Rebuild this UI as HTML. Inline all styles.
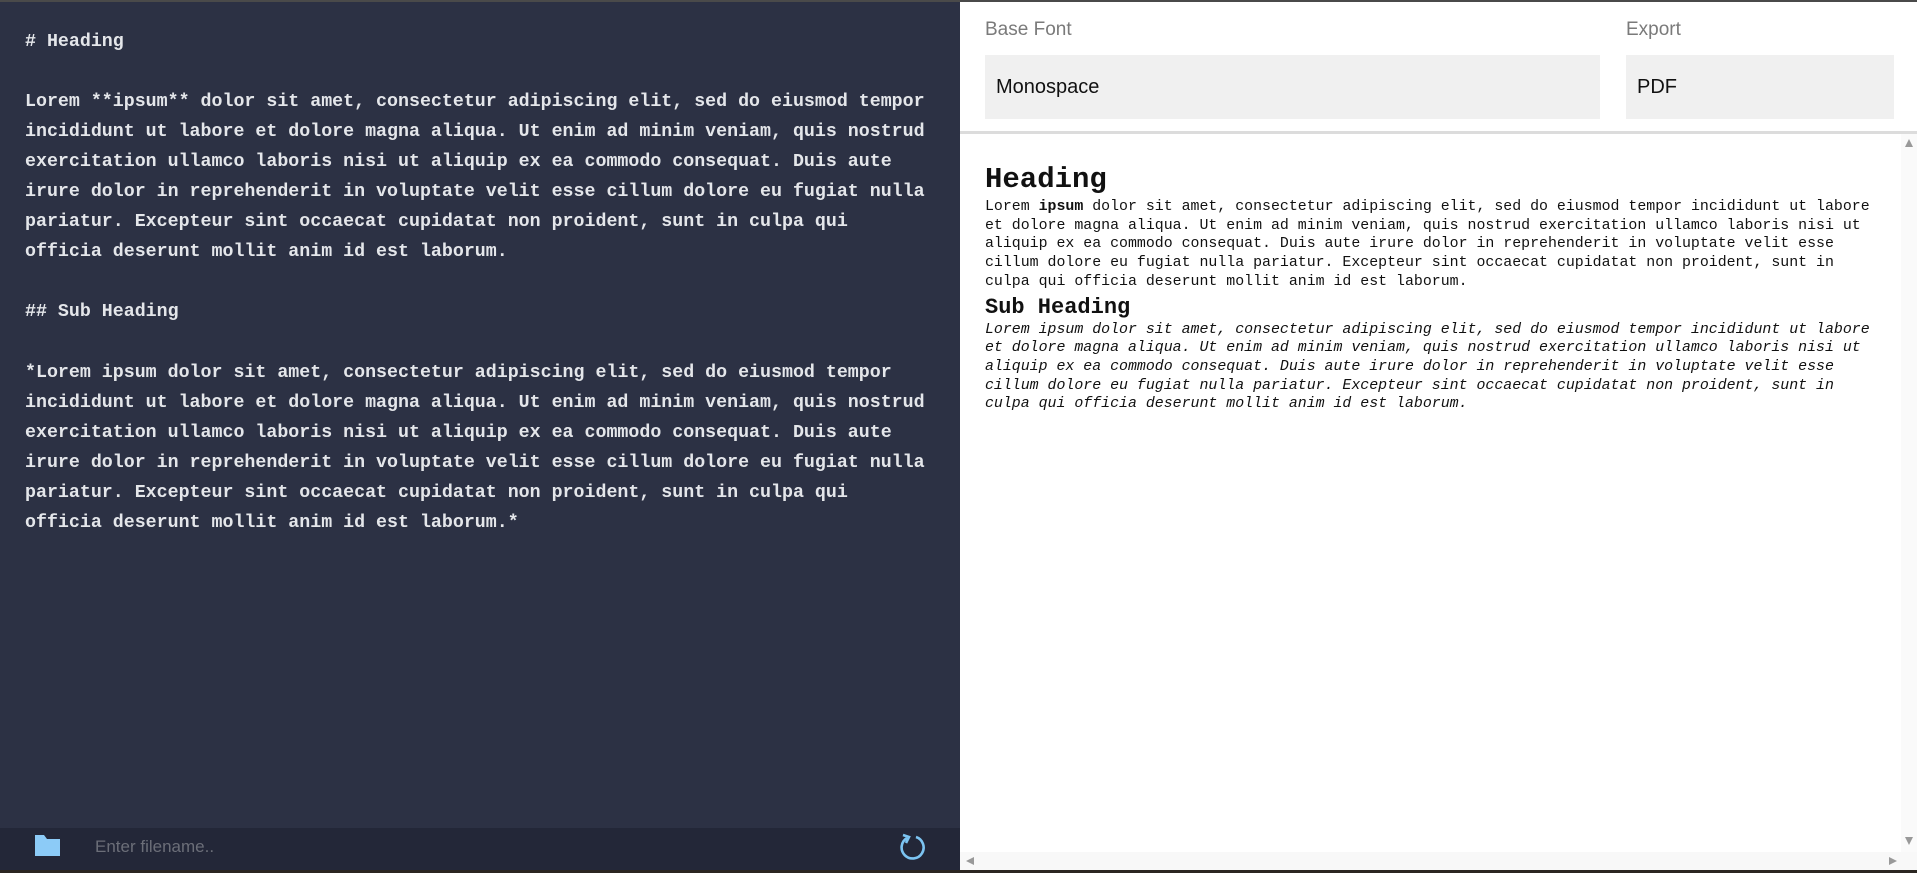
<!DOCTYPE html>
<html><head><meta charset="utf-8"><style>
*{margin:0;padding:0;box-sizing:border-box}
html,body{width:1917px;height:873px;overflow:hidden;background:#fff}
#top{position:absolute;left:0;top:0;width:1917px;height:2px;background:#4a4a4a}
#left{position:absolute;left:0;top:2px;width:960px;height:826px;background:#2c3144}
#ed{position:absolute;left:25px;top:25px;font:bold 18.3px/30.05px "Liberation Mono",monospace;color:#e4e6ea;white-space:pre}
#bar{position:absolute;left:0;top:828px;width:960px;height:42px;background:#232738}
#bot{position:absolute;left:0;top:870px;width:1917px;height:3px;background:#2b2621}
#ph{position:absolute;left:95px;top:837px;font:17px "Liberation Sans",sans-serif;color:#6b6e78}
.lab{position:absolute;top:19px;font:19px "Liberation Sans",sans-serif;color:#7a7a7a}
.box{position:absolute;top:55px;height:64px;background:#f0f0f0;font:20px "Liberation Sans",sans-serif;color:#111;padding-left:11px;line-height:64px}
#sep{position:absolute;left:960px;top:131px;width:957px;height:3px;background:#dcdcdc}
#prev{position:absolute;left:985px;top:162px;font:14.9px/18.7px "Liberation Mono",monospace;color:#111;white-space:pre}
#prev h1{font:bold 29px/36px "Liberation Mono",monospace;margin:0}
#prev h2{font:bold 22px/26px "Liberation Mono",monospace;margin:3px 0 0}
#vs{position:absolute;left:1901px;top:134px;width:16px;height:718px;background:#fafafa}
#hs{position:absolute;left:960px;top:852px;width:957px;height:18px;background:#f8f8f8}
</style></head><body>
<div id="top"></div>
<div id="left"><div id="ed"># Heading

Lorem **ipsum** dolor sit amet, consectetur adipiscing elit, sed do eiusmod tempor
incididunt ut labore et dolore magna aliqua. Ut enim ad minim veniam, quis nostrud
exercitation ullamco laboris nisi ut aliquip ex ea commodo consequat. Duis aute
irure dolor in reprehenderit in voluptate velit esse cillum dolore eu fugiat nulla
pariatur. Excepteur sint occaecat cupidatat non proident, sunt in culpa qui
officia deserunt mollit anim id est laborum.

## Sub Heading

*Lorem ipsum dolor sit amet, consectetur adipiscing elit, sed do eiusmod tempor
incididunt ut labore et dolore magna aliqua. Ut enim ad minim veniam, quis nostrud
exercitation ullamco laboris nisi ut aliquip ex ea commodo consequat. Duis aute
irure dolor in reprehenderit in voluptate velit esse cillum dolore eu fugiat nulla
pariatur. Excepteur sint occaecat cupidatat non proident, sunt in culpa qui
officia deserunt mollit anim id est laborum.*</div></div>
<div id="bar"></div>
<svg style="position:absolute;left:35px;top:835px" width="26" height="21"><path d="M0 0H9L12 4H25V21H0Z" fill="#8ccbf7"/></svg>
<div id="ph">Enter filename..</div>
<svg style="position:absolute;left:898px;top:832px" width="28" height="28"><path d="M9 6A11 11 0 1 0 18 5" fill="none" stroke="#7cc4f2" stroke-width="2.6"/><path d="M5 3L11 5L8 11" fill="none" stroke="#7cc4f2" stroke-width="2.6"/></svg>
<div id="bot"></div>
<div class="lab" style="left:985px">Base Font</div>
<div class="lab" style="left:1626px">Export</div>
<div class="box" style="left:985px;width:615px">Monospace</div>
<div class="box" style="left:1626px;width:268px">PDF</div>
<div id="sep"></div>
<div id="prev"><h1>Heading</h1>Lorem <b>ipsum</b> dolor sit amet, consectetur adipiscing elit, sed do eiusmod tempor incididunt ut labore
et dolore magna aliqua. Ut enim ad minim veniam, quis nostrud exercitation ullamco laboris nisi ut
aliquip ex ea commodo consequat. Duis aute irure dolor in reprehenderit in voluptate velit esse
cillum dolore eu fugiat nulla pariatur. Excepteur sint occaecat cupidatat non proident, sunt in
culpa qui officia deserunt mollit anim id est laborum.<h2>Sub Heading</h2><i>Lorem ipsum dolor sit amet, consectetur adipiscing elit, sed do eiusmod tempor incididunt ut labore
et dolore magna aliqua. Ut enim ad minim veniam, quis nostrud exercitation ullamco laboris nisi ut
aliquip ex ea commodo consequat. Duis aute irure dolor in reprehenderit in voluptate velit esse
cillum dolore eu fugiat nulla pariatur. Excepteur sint occaecat cupidatat non proident, sunt in
culpa qui officia deserunt mollit anim id est laborum.</i></div>
<div id="vs"></div>
<div id="hs"></div>
<svg style="position:absolute;left:1904px;top:138px" width="10" height="10"><path d="M5 1L9 9H1Z" fill="#999"/></svg>
<svg style="position:absolute;left:1904px;top:836px" width="10" height="10"><path d="M5 9L9 1H1Z" fill="#999"/></svg>
<svg style="position:absolute;left:965px;top:856px" width="10" height="10"><path d="M1 5L9 1V9Z" fill="#999"/></svg>
<svg style="position:absolute;left:1888px;top:856px" width="10" height="10"><path d="M9 5L1 1V9Z" fill="#999"/></svg>
</body></html>
